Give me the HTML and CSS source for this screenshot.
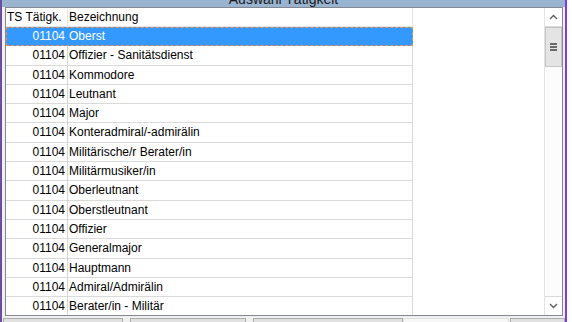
FILE: index.html
```html
<!DOCTYPE html>
<html>
<head>
    <title>Auswahl Tätigkeit</title>
    <link rel="stylesheet" href="styles.css">
</head>
<body>
    <div class="frame">
        <div class="window">
            <!-- Titelleiste, nur unterer Rand sichtbar -->
            <div class="titlebar"><span>Auswahl Tätigkeit</span></div>

            <div class="client">
                <div class="listview">
                    <div class="list-body">
                        <div class="header">
                            <div class="hcell num-col">TS Tätigk.</div>
                            <div class="hcell name-col">Bezeichnung</div>
                        </div>
                        <div class="row sel"><div class="cell num">01104</div><div class="cell name">Oberst</div></div>
                        <div class="row"><div class="cell num">01104</div><div class="cell name">Offizier - Sanitätsdienst</div></div>
                        <div class="row"><div class="cell num">01104</div><div class="cell name">Kommodore</div></div>
                        <div class="row"><div class="cell num">01104</div><div class="cell name">Leutnant</div></div>
                        <div class="row"><div class="cell num">01104</div><div class="cell name">Major</div></div>
                        <div class="row"><div class="cell num">01104</div><div class="cell name">Konteradmiral/-admirälin</div></div>
                        <div class="row"><div class="cell num">01104</div><div class="cell name">Militärische/r Berater/in</div></div>
                        <div class="row"><div class="cell num">01104</div><div class="cell name">Militärmusiker/in</div></div>
                        <div class="row"><div class="cell num">01104</div><div class="cell name">Oberleutnant</div></div>
                        <div class="row"><div class="cell num">01104</div><div class="cell name">Oberstleutnant</div></div>
                        <div class="row"><div class="cell num">01104</div><div class="cell name">Offizier</div></div>
                        <div class="row"><div class="cell num">01104</div><div class="cell name">Generalmajor</div></div>
                        <div class="row"><div class="cell num">01104</div><div class="cell name">Hauptmann</div></div>
                        <div class="row"><div class="cell num">01104</div><div class="cell name">Admiral/Admirälin</div></div>
                        <div class="row"><div class="cell num">01104</div><div class="cell name">Berater/in - Militär</div></div>
                    </div>

                    <!-- vertikale Bildlaufleiste -->
                    <div class="scrollbar">
                        <div class="sb-btn sb-up">
                            <svg width="9" height="6" viewBox="0 0 9 6"><path d="M1 5 L4.5 1.5 L8 5" fill="none" stroke="#606060" stroke-width="1.4"/></svg>
                        </div>
                        <div class="sb-thumb">
                            <div class="grip"></div>
                            <div class="grip"></div>
                            <div class="grip"></div>
                        </div>
                        <div class="sb-track"></div>
                        <div class="sb-btn sb-down">
                            <svg width="9" height="6" viewBox="0 0 9 6"><path d="M1 1 L4.5 4.5 L8 1" fill="none" stroke="#606060" stroke-width="1.4"/></svg>
                        </div>
                    </div>
                </div>

                <!-- Schaltflächen, abgeschnitten -->
                <div class="buttons">
                    <div class="btn b1"></div>
                    <div class="btn b2"></div>
                    <div class="btn b3"></div>
                    <div class="btn ghost"></div>
                    <div class="btn b5"></div>
                </div>
            </div>
        </div>
    </div>
</body>
</html>
```

FILE: styles.css
```css
html, body {
    margin: 0;
    height: 100%;
    overflow: hidden;
    background: #fff;
}
body {
    font-family: "Liberation Sans", Arial, sans-serif;
    font-size: 12px;
    color: #000;
}
/* Fensterrahmen */
.frame {
    width: 564px;
    height: 322px;
    border-left: 1px solid #7a3ce6;
    border-right: 2px solid #7a3ce6;
    overflow: hidden;
}
.window {
    height: 100%;
    border-left: 1px solid #5c5c5c;
    background: #f0f0f0;
    display: flex;
    flex-direction: column;
}
.titlebar {
    height: 7px;
    flex: none;
    background: #99b4d1;
    overflow: hidden;
    text-align: center;
    font-size: 14px;
    line-height: 14px;
    color: #1b1b1b;
}
.titlebar span {
    display: block;
    margin-top: -8px;
}
.client {
    padding: 0 2px 0 3px;
    display: flex;
    flex-direction: column;
}
/* Listenansicht */
.listview {
    box-sizing: border-box;
    height: 309px;
    border: 1px solid #828790;
    background: #fff;
    display: flex;
}
.list-body {
    flex: 1;
    overflow: hidden;
}
.header {
    display: flex;
    height: 19px;
}
.hcell {
    box-sizing: border-box;
    height: 19px;
    line-height: 19px;
    padding-left: 1px;
    border-right: 1px solid #e5e5e5;
    border-bottom: 1px solid #e5e5e5;
    white-space: nowrap;
}
.num-col { width: 62px; }
.name-col { width: 345px; }
.row {
    display: flex;
    width: 407px;
    height: 19.3px;
}
.cell {
    box-sizing: border-box;
    height: 100%;
    line-height: 19px;
    border-right: 1px solid #d6d6d6;
    border-bottom: 1px solid #dadada;
    white-space: nowrap;
    overflow: hidden;
}
.num {
    width: 62px;
    text-align: right;
    padding-right: 2px;
}
.name {
    width: 345px;
    padding-left: 1px;
}
.row.sel {
    outline: 1px dashed #f0904e;
    outline-offset: -1px;
}
.row.sel .cell {
    background: #3399ff;
    color: #fff;
    border-color: #3399ff;
}
/* Bildlaufleiste */
.scrollbar {
    width: 17px;
    flex: none;
    display: flex;
    flex-direction: column;
    background: #fcfcfc;
    border-left: 1px solid #e3e3e3;
}
.sb-btn {
    box-sizing: border-box;
    height: 19px;
    flex: none;
    display: flex;
    align-items: center;
    justify-content: center;
    background: #fff;
}
.sb-up { border-bottom: 1px solid #dadada; }
.sb-down { border-top: 1px solid #dadada; }
.sb-thumb {
    box-sizing: border-box;
    height: 40px;
    flex: none;
    background: #e4e4e4;
    border: 1px solid #c4c4c4;
    display: flex;
    flex-direction: column;
    align-items: center;
    justify-content: center;
    gap: 1px;
}
.grip {
    width: 7px;
    height: 2px;
    background: #6a6a6a;
}
.sb-track { flex: 1; }
/* Schaltflächen unten */
.buttons {
    display: flex;
    margin: 2px 0 0 -2px;
}
.btn {
    box-sizing: border-box;
    height: 24px;
    border: 1px solid #adadad;
    background: #e1e1e1;
    flex: none;
}
.b1 { width: 120px; }
.b2 { width: 116px; margin-left: 7px; }
.b3 { width: 150px; margin-left: 7px; }
.ghost {
    width: 106px;
    background: #f7f7f7;
    border-color: #e2e2e2;
}
.b5 { width: 55px; margin-left: 1px; }
```
